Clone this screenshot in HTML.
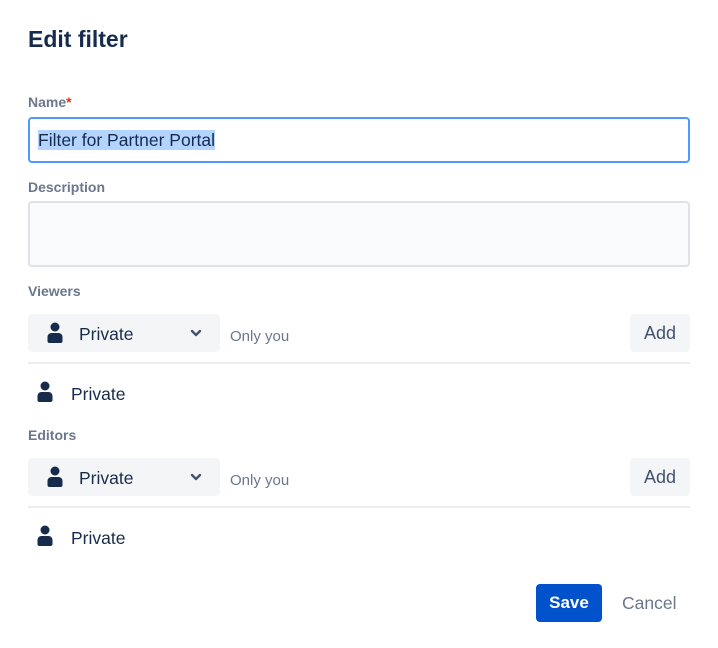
<!DOCTYPE html>
<html><head><style>
body{margin:0;width:718px;height:648px;background:#fff;font-family:"Liberation Sans",sans-serif;color:#172b4d;position:relative;overflow:hidden}
.a{position:absolute}
.lbl{font-size:14px;font-weight:bold;color:#6b778c}
.dd{background:#f4f5f7;border-radius:4px;width:192px;height:38px}
.add{background:#f4f5f7;border-radius:4px;width:60px;height:38px;font-size:18px;line-height:38px;text-align:center;color:#42526e}
.hr{left:28px;width:662px;height:2px;background:#ebecf0}
.t17{font-size:17.5px}
.ou{font-size:15px;color:#6b778c}
</style></head><body>
<div class="a" style="left:28px;top:26px;font-size:23px;font-weight:bold">Edit filter</div>
<div class="a lbl" style="left:28px;top:94px">Name<span style="color:#de350b">*</span></div>
<div class="a" style="left:28px;top:117px;width:658px;height:42px;border:2px solid #4c9aff;border-radius:4px"></div>
<div class="a t17" style="left:38px;top:130px;background:#b3d4ff;line-height:20px">Filter for Partner Portal</div>
<div class="a lbl" style="left:28px;top:179px">Description</div>
<div class="a" style="left:28px;top:201px;width:658px;height:62px;border:2px solid #dfe1e6;border-radius:4px;background:#fafbfc"></div>
<div class="a lbl" style="left:28px;top:283px">Viewers</div>

<svg width="0" height="0" style="position:absolute"><defs><symbol id="p" viewBox="0 0 16 22"><circle cx="8" cy="5" r="4.5" fill="#172b4d"/><path d="M0.5 15a4 4 0 0 1 4-4h7a4 4 0 0 1 4 4v4a2 2 0 0 1-2 2H2.5a2 2 0 0 1-2-2z" fill="#172b4d"/></symbol>
<symbol id="c" viewBox="0 0 12 8"><path d="M2 2l4 4 4-4" stroke="#42526e" stroke-width="2.4" fill="none" stroke-linecap="round" stroke-linejoin="round"/></symbol></defs></svg>

<div class="a dd" style="left:28px;top:314px"></div>
<svg class="a" style="left:47px;top:322px" width="16" height="22"><use href="#p"/></svg>
<div class="a t17" style="left:79px;top:324px">Private</div>
<svg class="a" style="left:190px;top:329px" width="12" height="8"><use href="#c"/></svg>
<div class="a ou" style="left:230px;top:328px">Only you</div>
<div class="a add" style="left:630px;top:314px">Add</div>
<div class="a hr" style="top:362px"></div>
<svg class="a" style="left:37px;top:381px" width="16" height="22"><use href="#p"/></svg>
<div class="a t17" style="left:71px;top:384px">Private</div>

<div class="a lbl" style="left:28px;top:427px">Editors</div>
<div class="a dd" style="left:28px;top:458px"></div>
<svg class="a" style="left:47px;top:466px" width="16" height="22"><use href="#p"/></svg>
<div class="a t17" style="left:79px;top:468px">Private</div>
<svg class="a" style="left:190px;top:473px" width="12" height="8"><use href="#c"/></svg>
<div class="a ou" style="left:230px;top:472px">Only you</div>
<div class="a add" style="left:630px;top:458px">Add</div>
<div class="a hr" style="top:506px"></div>
<svg class="a" style="left:37px;top:525px" width="16" height="22"><use href="#p"/></svg>
<div class="a t17" style="left:71px;top:528px">Private</div>

<div class="a" style="left:536px;top:584px;width:66px;height:38px;background:#0052cc;border-radius:4px;color:#fff;font-size:17px;font-weight:bold;line-height:38px;text-align:center">Save</div>
<div class="a" style="left:622px;top:584px;line-height:38px;font-size:17.5px;color:#6b778c">Cancel</div>
</body></html>
